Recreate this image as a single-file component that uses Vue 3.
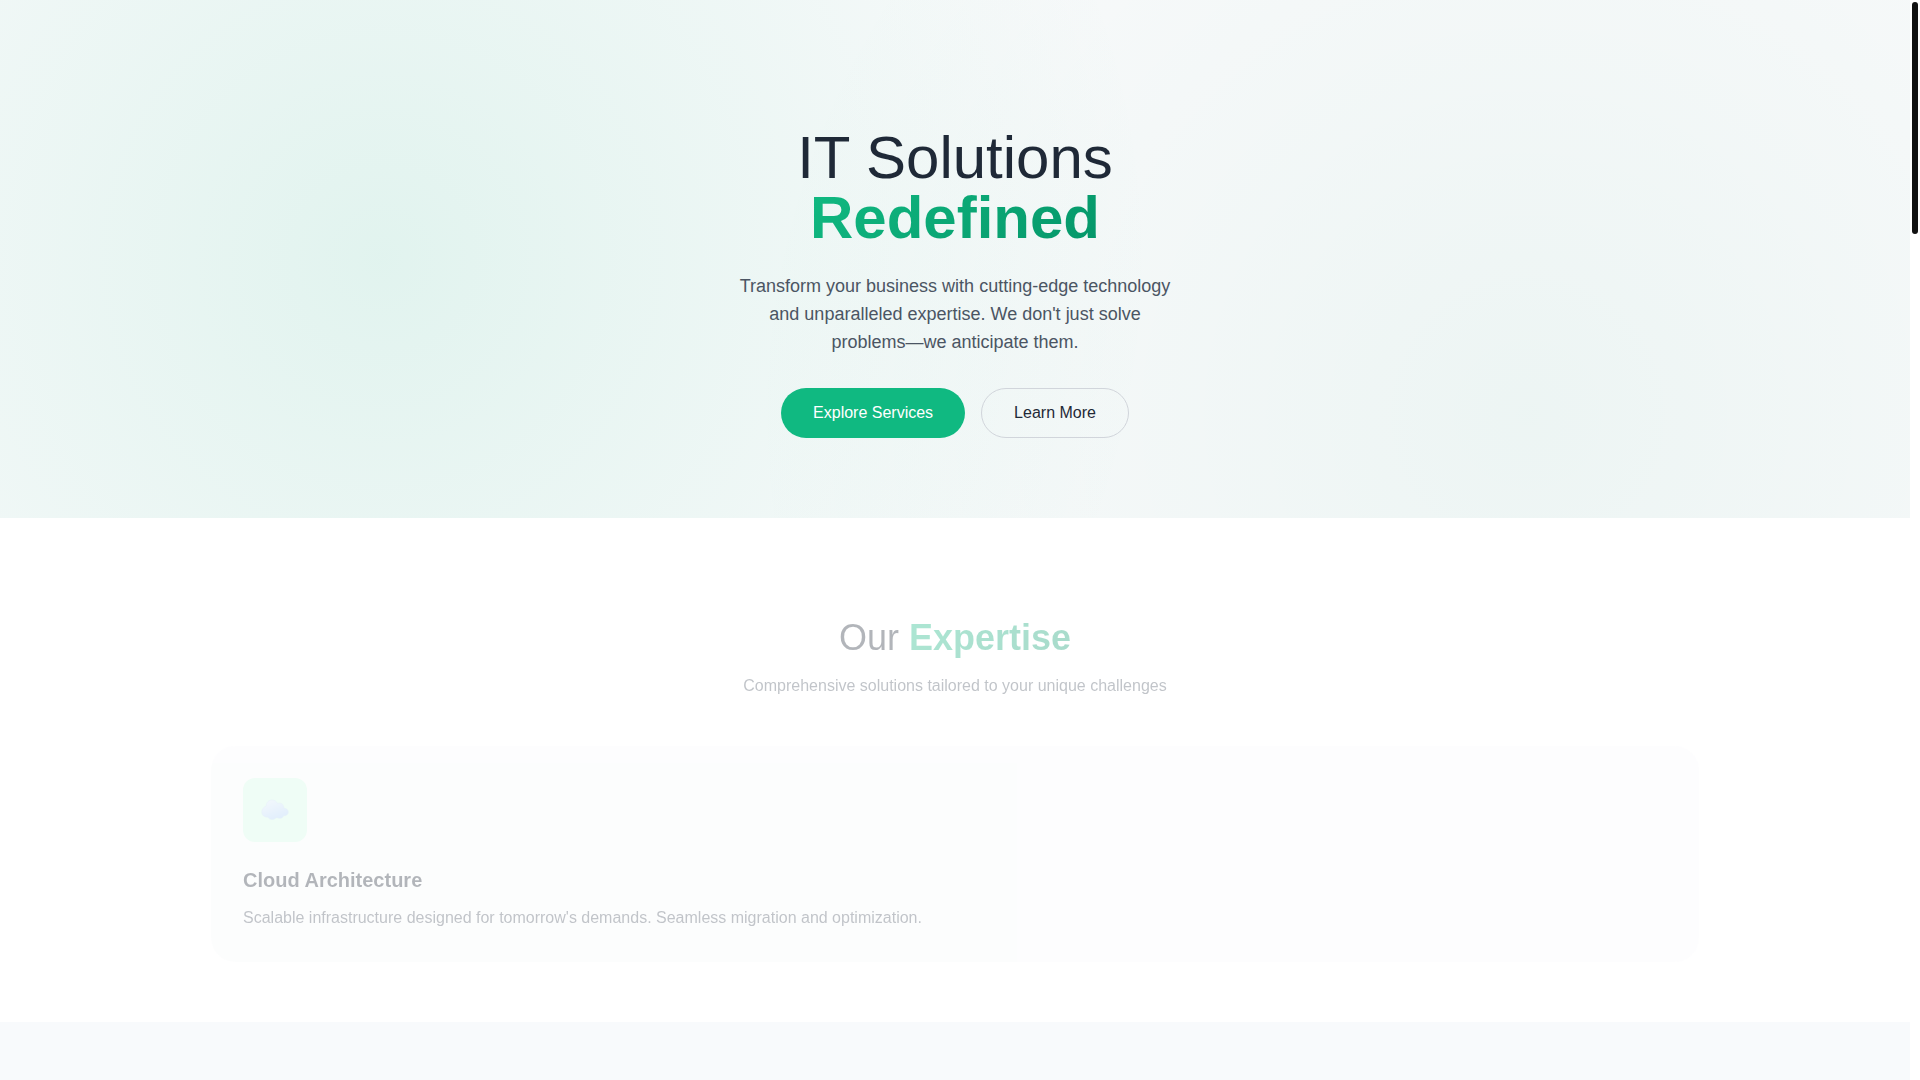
<script setup>
const services = [
  {
    title: 'Cloud Architecture',
    text: "Scalable infrastructure designed for tomorrow's demands. Seamless migration and optimization."
  }
]
</script>

<template>
  <div class="page">
    <main class="content">
      <section class="hero">
        <h1>
          <span>IT Solutions</span>
          <span class="accent">Redefined</span>
        </h1>
        <p class="lead">
          Transform your business with cutting-edge technology and unparalleled expertise. We don't just solve
          problems—we anticipate them.
        </p>
        <div class="actions">
          <button type="button" class="btn primary">Explore Services</button>
          <button type="button" class="btn outline">Learn More</button>
        </div>
      </section>

      <section class="expertise">
        <header class="fading heading">
          <h2>Our <span class="accent">Expertise</span></h2>
          <p>Comprehensive solutions tailored to your unique challenges</p>
        </header>
        <article v-for="service in services" :key="service.title" class="fading card">
          <div class="icon">
            <svg width="28" height="22" viewBox="0 0 28 22" aria-hidden="true">
              <defs>
                <linearGradient id="cloud" x1="0.2" y1="0" x2="0.7" y2="1">
                  <stop offset="0" stop-color="#dcebf8" />
                  <stop offset="1" stop-color="#a6cdf7" />
                </linearGradient>
              </defs>
              <path
                d="M5.200 7.200C5.200 3.500 7.800 1 11 1c2.600 0 4.600 1.400 5.500 3.500 3.400-1.200 6.300.8 6.300 4.100v.6c2.700.1 4.500 1.600 4.500 3.800 0 2.500-2.100 4-4.600 3.700-.8 2.100-3.300 3.300-5.900 2.200-1-.4-1.600-.3-2.300.4-2.200 2-6.200 1.700-7.700-1.200-3.400.3-6-1.900-6-5.100 0-2.900 1.800-5 4.400-5.800z"
                fill="url(#cloud)"
                stroke="#b5d2f0"
                stroke-width="0.5"
              />
            </svg>
          </div>
          <h3>{{ service.title }}</h3>
          <p>{{ service.text }}</p>
        </article>
      </section>

      <section class="next"></section>
    </main>
    <div class="rail" aria-hidden="true"><div class="thumb"></div></div>
  </div>
</template>

<style>
body {
  margin: 0;
  background: #fff;
}
</style>

<style scoped>
.page {
  display: flex;
  min-height: 100vh;
  font-family: "Liberation Sans", Arial, sans-serif;
  font-size: 16px;
  line-height: 24px;
  color: #1f2937;
}
h1,
h2,
h3,
p {
  margin: 0;
}
.content {
  flex: 1;
  min-width: 0;
  display: flex;
  flex-direction: column;
}
.rail {
  width: 6px;
  padding: 2px;
}
.thumb {
  height: 232px;
  border-radius: 3px;
  background: #111;
}
.accent {
  font-weight: 700;
  color: transparent;
  background: linear-gradient(135deg, #10b981, #059669);
  background-clip: text;
  -webkit-background-clip: text;
}
.hero {
  display: flex;
  flex-direction: column;
  align-items: center;
  padding: 128px 24px 80px;
  text-align: center;
  background:
    radial-gradient(circle at 20% 50%, rgba(16, 185, 129, 0.1) 0%, transparent 50%),
    radial-gradient(circle at 80% 80%, rgba(5, 150, 105, 0.05) 0%, transparent 50%),
    #f9fafb;
}
h1 {
  display: flex;
  flex-direction: column;
  align-items: center;
  font-size: 60px;
  line-height: 60px;
  font-weight: 300;
}
.lead {
  max-width: 448px;
  margin-top: 24px;
  font-size: 18px;
  line-height: 28px;
  color: #4b5563;
}
.actions {
  display: flex;
  gap: 16px;
  margin-top: 32px;
}
.btn {
  padding: 12px 32px;
  border: 0;
  border-radius: 25px;
  font: inherit;
  font-weight: 500;
  cursor: pointer;
}
.primary {
  color: #fff;
  background: #10b981;
}
.outline {
  color: #1f2937;
  background: transparent;
  border: 1px solid #d1d5db;
}
.expertise {
  display: flex;
  flex-direction: column;
  gap: 48px;
  box-sizing: border-box;
  width: 100%;
  max-width: 1536px;
  margin: 0 auto;
  padding: 100px 24px 60px;
}
.fading {
  opacity: 0.34;
}
.heading {
  text-align: center;
}
h2 {
  font-size: 36px;
  line-height: 40px;
  font-weight: 300;
}
.heading p {
  margin-top: 16px;
  color: #4b5563;
}
.card {
  padding: 32px;
  border-radius: 24px;
  background: #f9fafb;
}
.icon {
  display: flex;
  align-items: center;
  justify-content: center;
  width: 64px;
  height: 64px;
  border-radius: 12px;
  background: #d1fae5;
}
h3 {
  margin-top: 24px;
  font-size: 20px;
  line-height: 28px;
  font-weight: 600;
}
.card p {
  margin-top: 12px;
  color: #4b5563;
}
.next {
  flex: 1;
  background: #f8fafc;
}
</style>
